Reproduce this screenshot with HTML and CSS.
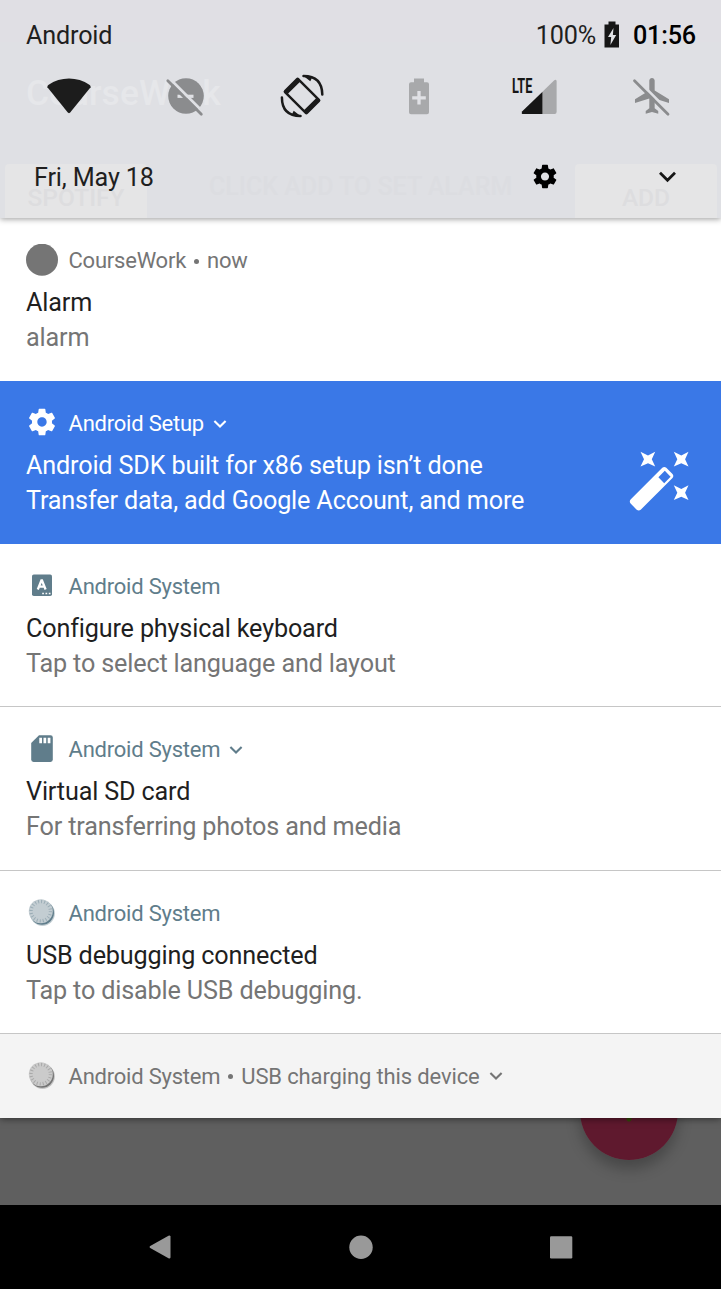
FILE: index.html
```
<!DOCTYPE html>
<html lang="en">
<head>
<meta charset="utf-8">
<title>Notifications</title>
<link rel="stylesheet" href="styles.css">
</head>
<body>
<svg class="defs" width="0" height="0">
  <symbol id="gear" viewBox="0 0 24 24"><path d="M19.43 12.98c.04-.32.07-.64.07-.98s-.03-.66-.07-.98l2.11-1.65c.19-.15.24-.42.12-.64l-2-3.46c-.12-.22-.39-.3-.61-.22l-2.49 1c-.52-.4-1.08-.73-1.69-.98l-.38-2.65C14.46 2.18 14.25 2 14 2h-4c-.25 0-.46.18-.49.42l-.38 2.65c-.61.25-1.17.59-1.69.98l-2.49-1c-.23-.09-.49 0-.61.22l-2 3.46c-.13.22-.07.49.12.64l2.11 1.65c-.04.32-.07.65-.07.98s.03.66.07.98l-2.11 1.65c-.19.15-.24.42-.12.64l2 3.46c.12.22.39.3.61.22l2.49-1c.52.4 1.08.73 1.69.98l.38 2.65c.03.24.24.42.49.42h4c.25 0 .46-.18.49-.42l.38-2.65c.61-.25 1.17-.59 1.69-.98l2.49 1c.23.09.49 0 .61-.22l2-3.46c.12-.22.07-.49-.12-.64l-2.11-1.65zM12 15.5c-1.93 0-3.5-1.57-3.5-3.5s1.57-3.5 3.5-3.5 3.5 1.57 3.5 3.5-1.57 3.5-3.5 3.5z"/></symbol>
  <symbol id="chevron" viewBox="0 0 14 10"><path d="M1.400 2l5.600 5.600L12.600 2" fill="none" stroke="currentColor" stroke-width="2.100"/></symbol>
  <symbol id="disc" viewBox="0 0 32 32">
    <circle cx="16.500" cy="16.500" r="12.400" opacity=".38"/>
    <circle cx="16" cy="15.700" r="12"/>
    <circle class="disc-face" cx="14.800" cy="14.200" r="12"/>
    <circle cx="14.800" cy="14.200" r="9.700" fill="none" stroke="currentColor" stroke-width="3.400" stroke-dasharray="1 2.047" opacity=".4"/>
  </symbol>
</svg>
<div class="screen">
  <header class="shade">
    <div class="backdrop">
      <span class="ghost-title">CourseWork</span>
      <span class="ghost-btn ghost-left">SPOTIFY</span>
      <span class="ghost-label">CLICK ADD TO SET ALARM</span>
      <span class="ghost-btn ghost-right">ADD</span>
    </div>
    <div class="status">
      <span class="carrier">Android</span>
      <span class="percent">100%</span>
      <svg class="battery" width="16" height="27" viewBox="0 0 16 27"><path d="M4.500 0.500h7v3H15v23H.5v-23h4z" fill="#161616"/><path d="M9.500 7L4 16h3.200l-.8 8L12.200 14H8.900z" fill="#e0e1e5"/></svg>
      <span class="clock">01:56</span>
    </div>
    <div class="tiles">
      <svg viewBox="0 0 48 48"><path d="M24 41.300L22.800 40.500 2.400 15.200Q2.100 13.800 3.300 12.900 13 6.500 24 6.500T44.700 12.900Q45.900 13.800 45.600 15.200L25.200 40.500z" fill="#1c1c1c"/></svg>
      <svg viewBox="0 0 48 48"><circle cx="24" cy="24" r="17.800" fill="#8b8c8e"/><path d="M15.500 24.300h16" stroke="#e0e1e5" stroke-width="3.200"/><path d="M7.500 6.500l34 34" stroke="#dfe0e4" stroke-width="3"/><path d="M5.800 8.800L39.300 42.200" stroke="#8b8c8e" stroke-width="2.800" stroke-linecap="round"/></svg>
      <svg viewBox="0 0 48 48"><g transform="rotate(-45 24 24)"><path fill-rule="evenodd" fill="#1a1a1a" d="M15.500 7.300h17Q34.500 7.300 34.500 9.300v29.400q0 2-2 2h-17q-2 0-2-2V9.300q0-2 2-2zM15.900 12.500v23h16.200v-23z"/></g><path d="M25.500 4Q44 4 44.300 22.500M22.500 44Q4 44 3.900 25.500" fill="none" stroke="#1a1a1a" stroke-width="2.500" stroke-linecap="round"/><path d="M25.500 4l6.800 5.200 2-4zM22.500 44l-6.800-5.200-2 4z" fill="#1a1a1a"/></svg>
      <svg viewBox="0 0 48 48"><path d="M19 6.500h10v3.800h3q2 0 2 2v28q0 2-2 2H16q-2 0-2-2v-28q0-2 2-2h3z" fill="#a8a9ab"/><path d="M24 19v13.500M17.200 25.800h13.600" stroke="#e0e1e5" stroke-width="3.300"/></svg>
      <svg viewBox="0 0 48 48"><g transform="translate(.9 0)"><path d="M10.500 42h32.200q2 0 2-2V9q-.5-2-2.300-.8L10.200 39.500q-1 2 .3 2.500z" fill="#a8a9ab"/><path d="M30.500 20v22h-20q-1.300-.5-.3-2.500z" fill="#161616"/><text class="lte" x="0" y="20.800" textLength="20.500" lengthAdjust="spacingAndGlyphs">LTE</text></g></svg>
      <svg viewBox="0 0 48 48"><path transform="translate(3.400 2.300) scale(1.790)" fill="#8b8c8e" d="M21 16v-2l-8-5V3.500c0-.83-.67-1.500-1.500-1.500S10 2.670 10 3.500V9l-8 5v2l8-2.500V19l-2 1.500V22l3.500-1 3.500 1v-1.500L13 19v-5.500l8 2.500z"/><path d="M8 6.500l34 34" stroke="#dfe0e4" stroke-width="2.600"/><path d="M6.500 8.800L40 42.200" stroke="#8b8c8e" stroke-width="2.800" stroke-linecap="round"/></svg>
    </div>
    <div class="dateline">
      <span class="date">Fri, May 18</span>
      <svg class="settings" width="28" height="29"><use href="#gear"/></svg>
      <svg class="expand" width="20" height="14" viewBox="0 0 20 14"><path d="M2 2.800l7.500 7.500L17 2.800" fill="none" stroke="#161616" stroke-width="2.800"/></svg>
    </div>
  </header>

  <main class="list">
    <article class="note plain first">
      <div class="head"><svg class="ico" viewBox="0 0 32 32"><circle cx="16" cy="15.700" r="16" fill="#757575"/></svg><span>CourseWork</span><i class="dot"></i><span>now</span></div>
      <div class="title">Alarm</div>
      <div class="text">alarm</div>
    </article>
    <article class="note setup">
      <div class="copy">
        <div class="head"><svg class="ico cog"><use href="#gear"/></svg><span>Android Setup</span><svg class="chev"><use href="#chevron"/></svg></div>
        <div class="title">Android SDK built for x86 setup isn’t done</div>
        <div class="text">Transfer data, add Google Account, and more</div>
      </div>
      <svg class="wand" width="70" height="70" viewBox="0 0 70 70" fill="#fff"><path fill-rule="evenodd" d="M6.600 52.500L38.300 20.700q2-1.600 4 0l6.200 6.300q1.600 2 0 4L16.700 62.800q-2 1.600-4 0l-6.100-6.300q-1.600-2 0-4zM40.800 23.800l-6.400 6.500 5.800 5.900 6.400-6.500z"/><path id="spark" d="M16.500 4.800L24 8.400 31.200 4.800 27.800 12.300 31.200 19.500 24 16.200 16.500 19.500 20 12.300z"/><use href="#spark" x="33.300"/><use href="#spark" x="33.300" y="33.500"/></svg>
    </article>
    <article class="note">
      <div class="head"><svg class="ico" viewBox="0 0 32 32"><rect x="6" y="4.500" width="20" height="21.500" rx="1.800" fill="#607d8b"/><path d="M11.800 19.500L15.400 10.500h.6l3.600 9M12.900 16.700h5.700" fill="none" stroke="#fff" stroke-width="2.300"/><path d="M16.200 23.500h8.500" stroke="#fff" stroke-width="1.700" stroke-dasharray="1.700 1.600"/></svg><span>Android System</span></div>
      <div class="title">Configure physical keyboard</div>
      <div class="text">Tap to select language and layout</div>
    </article>
    <article class="note">
      <div class="head"><svg class="ico" viewBox="0 0 32 32"><path d="M13 2.300h11.500Q26.800 2.300 26.800 4.600v22q0 2.300-2.300 2.300h-17Q5.200 28.900 5.200 26.600V10.100z" fill="#607d8b"/><path d="M13.300 4.800h2.700v5.500h-2.700zM17.500 4.800h2.700v5.500h-2.700zM21.700 4.800h2.700v5.500h-2.700z" fill="#fff"/></svg><span>Android System</span><svg class="chev"><use href="#chevron"/></svg></div>
      <div class="title">Virtual SD card</div>
      <div class="text">For transferring photos and media</div>
    </article>
    <article class="note">
      <div class="head"><svg class="ico disc"><use href="#disc"/></svg><span>Android System</span></div>
      <div class="title">USB debugging connected</div>
      <div class="text">Tap to disable USB debugging.</div>
    </article>
    <article class="note mini plain">
      <div class="head"><svg class="ico disc"><use href="#disc"/></svg><span>Android System</span><i class="dot"></i><span class="summary">USB charging this device</span><svg class="chev"><use href="#chevron"/></svg></div>
    </article>
  </main>

  <div class="scrim"><div class="fab"></div></div>
  <nav class="nav">
    <svg viewBox="0 0 24 26"><path d="M22.500 2.500v21q-.5 1.500-2 .8L2.200 14q-1.500-1 0-2L20.500 1.700q1.500-.7 2 .8z"/></svg>
    <svg viewBox="0 0 24 26"><circle cx="12" cy="13.300" r="11.700"/></svg>
    <svg viewBox="0 0 24 26"><rect x="1" y="2.200" width="22.300" height="22.300" rx="1.200"/></svg>
  </nav>
</div>
</body>
</html>
```
FILE: styles.css
```
* { box-sizing: border-box; }
body { margin: 0; font-family: Roboto, "Liberation Sans", sans-serif; }
.defs { position: absolute; }
.screen { width: 721px; height: 1289px; display: flex; flex-direction: column; overflow: hidden; background: #000; }
.screen svg { display: block; flex: none; }

.shade { position: relative; z-index: 2; height: 218px; background: linear-gradient(#e0dfe4 42px, #dfe0e4 42px); box-shadow: 0 1px 6px rgba(0, 0, 0, .4); }
.backdrop { position: absolute; inset: 0; overflow: hidden; }
.backdrop span { position: absolute; white-space: nowrap; font-weight: 500; font-size: 24.500px; line-height: 30px; color: #dbdce0; }
.backdrop .ghost-title { left: 26px; top: 72px; font-size: 35.500px; line-height: 42px; color: #e6e7ea; }
.backdrop .ghost-label { left: 209px; top: 172px; font-size: 25px; color: #dcdde1; }
.backdrop .ghost-btn { top: 164px; height: 60px; padding-top: 19px; background: #e5e5e6; color: #dddddf; border-radius: 4px; text-align: center; }
.backdrop .ghost-left { left: 5px; width: 142px; }
.backdrop .ghost-right { left: 575px; width: 142px; }

.status, .tiles, .dateline { position: relative; display: flex; align-items: center; }
.status { height: 72px; padding: 0 25px 1px 26px; font-size: 25.200px; letter-spacing: -.17px; color: #1f1f1f; }
.carrier { margin-right: auto; }
.battery { margin: -3px 13px 0 8px; }
.clock { font-weight: 500; color: #000; }
.tiles { height: 48px; padding-left: 10.700px; }
.tiles svg { width: 48px; height: 48px; margin: 0 34.300px; }
.lte { font-weight: 700; font-size: 19.500px; letter-spacing: 0; fill: #161616; }
.dateline { height: 98px; padding: 0 43px 0 34px; align-items: flex-start; }
.date { margin: 43px auto 0 0; font-size: 25.200px; letter-spacing: -.15px; line-height: 30px; color: #1f1f1f; }
.settings { margin: 41.500px 99px 0 0; }
.expand { margin-top: 49.500px; }

.list { height: 900px; position: relative; z-index: 1; box-shadow: 0 1px 7px rgba(0, 0, 0, .5); }
.note { height: 163.300px; padding: 26px; background: #fff; border-bottom: 1px solid #c6c6c6; color: #607d8b; }
.first { height: 163px; border: 0; }
.head { display: flex; align-items: center; height: 32px; font-size: 22px; letter-spacing: -.22px; line-height: 32px; white-space: nowrap; }
.head span { padding-top: 2px; }
.head .summary { letter-spacing: -.14px; }
.ico { width: 32px; height: 32px; margin-right: 10.500px; fill: currentColor; }
.cog { margin-top: -1.500px; }
.chev { width: 14px; height: 10px; margin: 1px 0 0 9px; }
.dot { width: 5px; height: 5px; margin: 2px 8px 0; border-radius: 50%; background: currentColor; }
.title, .text { font-size: 25.200px; letter-spacing: -.16px; line-height: 35px; white-space: nowrap; }
.title { margin-top: 9px; color: #1f1f1f; }
.text { color: #757575; }
.plain { color: #757575; }
.setup { display: flex; align-items: flex-start; justify-content: space-between; height: 163px; background: #3a78e7; border: 0; color: #fff; }
.setup .title, .setup .text { color: #fff; }
.wand { margin: 40px 1px 0 0; }
.disc-face { fill: #c3cdd2; }
.disc { color: #607d8b; }
.mini { height: 84.100px; background: #f4f4f4; border: 0; }
.mini .disc { color: #757575; filter: grayscale(1); }

.scrim { position: relative; height: 87px; overflow: hidden; background: #5f5f5f; }
.fab { position: absolute; left: 580px; top: -56px; width: 98px; height: 98px; border-radius: 50%; background: radial-gradient(circle at 50% 57px, #334a08 2px, #5f192e 3px); box-shadow: 0 9px 14px rgba(0, 0, 0, .25); }
.nav { height: 84px; display: flex; align-items: center; justify-content: space-between; padding: 0 148px; background: #000; }
.nav svg { width: 24px; height: 26px; fill: #999; }
```
